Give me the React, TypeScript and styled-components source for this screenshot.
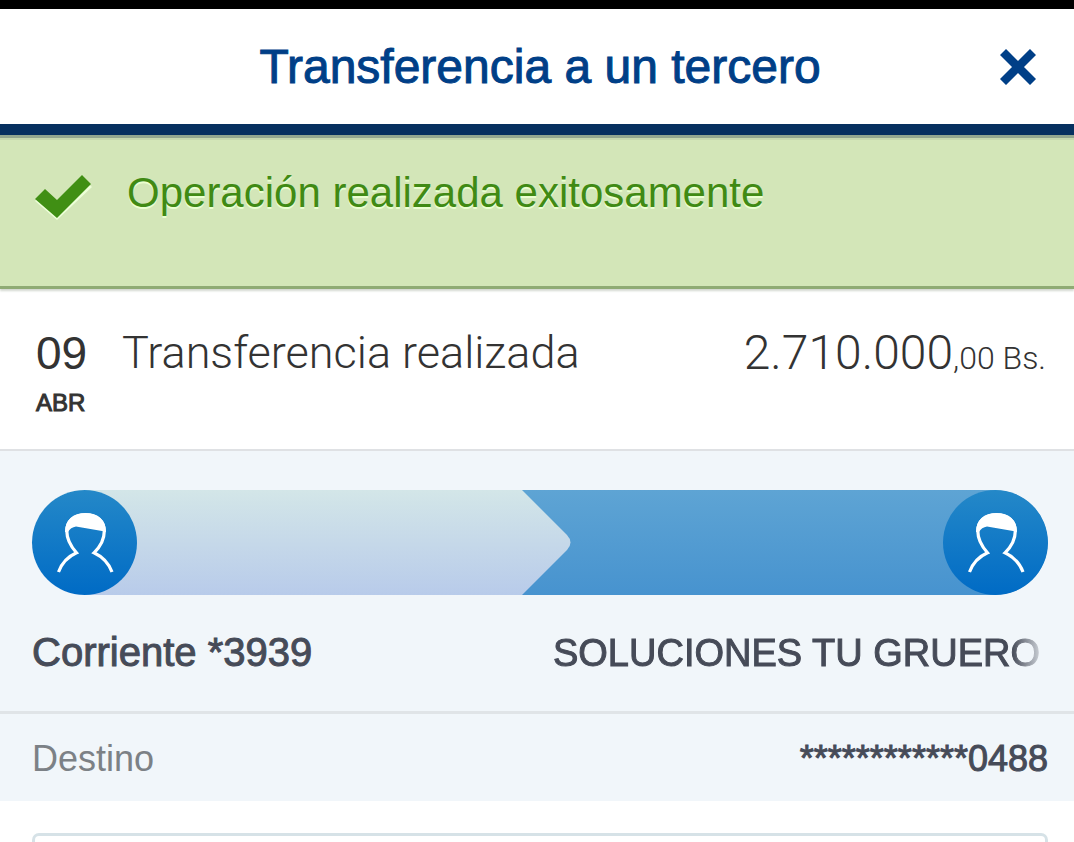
import React from "react";
import styled, { createGlobalStyle } from "styled-components";

const GlobalStyle = createGlobalStyle`
  *, *::before, *::after { box-sizing: border-box; }
  body {
    margin: 0;
    background: #fff;
    color: #333;
    font-family: "Liberation Sans", Arial, sans-serif;
  }
  h1, h2, p, dl, dt, dd { margin: 0; font-weight: 400; }
`;

const Screen = styled.main`
  display: flex;
  flex-direction: column;
  height: 100vh;
  overflow: hidden;
  border-top: 9px solid #000;

  & > * { flex-shrink: 0; }
`;

const Header = styled.header`
  display: grid;
  grid-template-columns: 1fr auto 1fr;
  align-items: center;
  height: 126px;
  padding: 0 38px 0 44px;
  border-bottom: 11px solid #06305f;
`;

const Title = styled.h1`
  grid-column: 2;
  font-size: 48px;
  line-height: 56px;
  color: #003f87;
  -webkit-text-stroke: 1px #003f87;
`;

const CloseButton = styled.button`
  justify-self: end;
  display: flex;
  padding: 0;
  border: 0;
  background: none;
  color: #003f87;
  cursor: pointer;
`;

const Notice = styled.section`
  display: flex;
  align-items: flex-start;
  gap: 34px;
  min-height: 154px;
  padding: 32px 34px;
  background: #d3e6b8;
  border-bottom: 3px solid #8fab74;
  box-shadow: inset 0 3px 0 #93a78f, inset 0 5px 0 #c6d8ae, 0 2px 2px #d4d8d0;
  color: #408a14;
`;

const NoticeText = styled.p`
  font-size: 42px;
  line-height: 52px;
  text-shadow: 0 2px 0 #eaffd0;
`;

const CheckIcon = styled.svg`
  margin-top: 6px;
`;

const Movement = styled.section`
  display: flex;
  align-items: flex-start;
  padding: 36px 28px 24px 36px;
  border-bottom: 2px solid #dfe1e4;
`;

const DateBlock = styled.time`
  display: flex;
  flex-direction: column;
  width: 86px;
`;

const Day = styled.span`
  font-size: 46px;
  line-height: 56px;
`;

const Month = styled.span`
  font-size: 24px;
  line-height: 44px;
  -webkit-text-stroke: 1px #333;
`;

const Concept = styled.h2`
  flex: 1;
  font-family: Roboto, "Liberation Sans", sans-serif;
  font-weight: 300;
  font-size: 45px;
  line-height: 56px;
`;

const Amount = styled.p`
  font-family: Roboto, "Liberation Sans", sans-serif;
  font-weight: 300;
  font-size: 48px;
  line-height: 56px;
  white-space: nowrap;
`;

const Decimals = styled.span`
  font-size: 32px;
`;

const Parties = styled.section`
  padding: 39px 26px 0 32px;
  min-height: 263px;
  background: #f1f6fa;
  border-bottom: 3px solid #e0e4e7;
`;

const Flow = styled.div`
  display: flex;
  justify-content: space-between;
  position: relative;
  height: 105px;
  border-radius: 53px;
  background: linear-gradient(#5ea4d4, #4793cf);
  overflow: hidden;
`;

const ArrowBody = styled.div`
  flex: 0 0 48%;
  background: linear-gradient(#d3e6e8, #b8cbea);
`;

const ArrowShape = styled.svg`
  flex: none;
  margin-right: auto;
`;

const AvatarIcon = styled.svg<{ $overlap?: boolean }>`
  flex: none;
  margin-right: ${(p) => (p.$overlap ? "-105px" : "0")};
  z-index: 1;
`;

const Names = styled.div`
  display: flex;
  justify-content: space-between;
  align-items: baseline;
  padding-top: 34px;
  font-size: 40px;
  line-height: 46px;
  color: #464b58;
  -webkit-text-stroke: 1px #464b58;
`;

const Recipient = styled.p`
  padding-right: 8px;
  font-size: 38px;
  white-space: nowrap;
  mask-image: linear-gradient(to right, #000 calc(100% - 36px), transparent);
`;

const Detail = styled.dl`
  display: flex;
  justify-content: space-between;
  padding: 22px 26px 19px 32px;
  background: #f1f6fa;
  font-size: 36px;
  line-height: 46px;
`;

const DetailLabel = styled.dt`
  color: #7c8186;
`;

const DetailValue = styled.dd`
  color: #464b58;
  -webkit-text-stroke: 1px #464b58;
`;

const Card = styled.section`
  flex: 1;
  margin: 32px 26px 0 32px;
  border: 3px solid #d6e2e7;
  border-bottom: 0;
  border-radius: 7px 7px 0 0;
`;

function Avatar({ id, overlap }: { id: string; overlap?: boolean }) {
  return (
    <AvatarIcon $overlap={overlap} width="105" height="105" viewBox="0 0 105 105" aria-hidden="true">
      <defs>
        <linearGradient id={id} x1="0" y1="0" x2="0" y2="1">
          <stop offset="0" stopColor="#2488c8" />
          <stop offset="1" stopColor="#006bc5" />
        </linearGradient>
      </defs>
      <circle cx="52.5" cy="52.5" r="52.5" fill={`url(#${id})`} />
      <path
        d="M26.500 82C29.500 74 35 67 44.500 62.800C38 55.500 34.800 48 34.800 41C34.800 31 42 24.800 53.500 24.800C65 24.800 72.300 31 72.300 41C72.300 49 69 56 62 62.800C71 67 77 74 80 82"
        fill="none"
        stroke="#fff"
        strokeWidth="3.200"
      />
      <path d="M33 42C33 30 41 23 53.500 23C66 23 74 30 74 42L70 41L44 36.500C40.500 37 37.500 39 36 42Z" fill="#fff" />
    </AvatarIcon>
  );
}

export default function App() {
  return (
    <>
      <GlobalStyle />
      <Screen>
        <Header>
          <Title>Transferencia a un tercero</Title>
          <CloseButton type="button" aria-label="Cerrar">
            <svg width="36" height="36" viewBox="0 0 36 36" aria-hidden="true">
              <path d="M3 3L33 33M33 3L3 33" stroke="currentColor" strokeWidth="8.500" />
            </svg>
          </CloseButton>
        </Header>
        <Notice role="status">
          <CheckIcon width="59" height="48" viewBox="0 0 59 48" aria-hidden="true">
            <path d="M1 28L11 19L23 30L48 5L58 14L23 47Z" fill="#edffd8" />
            <path d="M1 26L11 16L23 27L48 2L57 11L23 45Z" fill="#408f14" />
          </CheckIcon>
          <NoticeText>Operación realizada exitosamente</NoticeText>
        </Notice>
        <Movement>
          <DateBlock>
            <Day>09</Day>
            <Month>ABR</Month>
          </DateBlock>
          <Concept>Transferencia realizada</Concept>
          <Amount>
            2.710.000<Decimals>,00 Bs.</Decimals>
          </Amount>
        </Movement>
        <Parties>
          <Flow>
            <Avatar id="origin" overlap />
            <ArrowBody />
            <ArrowShape width="51" height="105" viewBox="0 0 51 105" aria-hidden="true">
              <defs>
                <linearGradient id="tip" gradientUnits="userSpaceOnUse" x1="0" y1="0" x2="0" y2="105">
                  <stop offset="0" stopColor="#d3e6e8" />
                  <stop offset="1" stopColor="#b8cbea" />
                </linearGradient>
              </defs>
              <path d="M0 0H2L47 45Q54 52.500 47 60L2 105H0Z" fill="url(#tip)" />
            </ArrowShape>
            <Avatar id="target" />
          </Flow>
          <Names>
            <p>Corriente *3939</p>
            <Recipient>SOLUCIONES TU GRUERO</Recipient>
          </Names>
        </Parties>
        <Detail>
          <DetailLabel>Destino</DetailLabel>
          <DetailValue>************0488</DetailValue>
        </Detail>
        <Card aria-label="Detalle" />
      </Screen>
    </>
  );
}
